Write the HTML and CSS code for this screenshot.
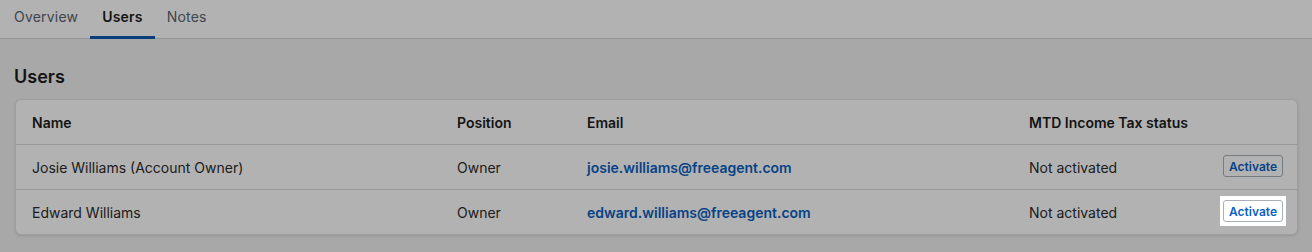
FILE: index.html
```
<!DOCTYPE html>
<html lang="en">
<head>
  <meta charset="UTF-8">
  <meta name="viewport" content="width=device-width, initial-scale=1.0">
  <title>Users</title>
  <link rel="stylesheet" href="styles.css">
</head>
<body>
  <nav class="tabs">
    <a class="tab">Overview</a>
    <a class="tab active">Users</a>
    <a class="tab">Notes</a>
  </nav>

  <main class="page">
    <h2 class="section-title">Users</h2>

    <div class="card">
      <div class="row head">
        <div class="cell">Name</div>
        <div class="cell">Position</div>
        <div class="cell">Email</div>
        <div class="cell">MTD Income Tax status</div>
        <div class="cell"></div>
      </div>
      <div class="row">
        <div class="cell">Josie Williams (Account Owner)</div>
        <div class="cell">Owner</div>
        <div class="cell"><a class="email">josie.williams@freeagent.com</a></div>
        <div class="cell">Not activated</div>
        <div class="cell action"><button class="btn">Activate</button></div>
      </div>
      <div class="row">
        <div class="cell">Edward Williams</div>
        <div class="cell">Owner</div>
        <div class="cell"><a class="email">edward.williams@freeagent.com</a></div>
        <div class="cell">Not activated</div>
        <div class="cell action"><span class="spotlight"><button class="btn">Activate</button></span></div>
      </div>
    </div>
  </main>
</body>
</html>
```

FILE: styles.css
```
:root {
  --text: #2b2b2b;
  --muted: #5b6470;
  --blue: #0b5fc0;
  --line: #dcdcdc;
  --page-bg: #f1f1f1;
}

body {
  margin: 0;
  background-color: var(--page-bg);
  color: var(--text);
  font-family: Inter, "Noto Sans", sans-serif;
  font-size: 14px;
  height: 252px;
  overflow: hidden;
}

.tabs {
  display: flex;
  height: 38px;
  padding-left: 2px;
  background-color: #fff;
  border-bottom: 1px solid #d4d4d4;
}

.tab {
  display: flex;
  align-items: center;
  padding: 0 12px 4px;
  color: var(--muted);
  letter-spacing: 0.2px;
  border-bottom: 3px solid transparent;
  margin-bottom: -1px;
}

.tab.active {
  color: #1c1c1c;
  font-weight: 600;
  border-bottom-color: #0d57b0;
}

.page {
  padding: 0 14px 0 15px;
}

.section-title {
  margin: 27px 0 11px -1px;
  font-size: 18px;
  font-weight: 600;
  color: #1c1c1c;
  line-height: 22px;
}

.card {
  width: 1281px;
  background-color: #fff;
  border: 1px solid #e2e2e2;
  border-radius: 6px;
  box-shadow: 0 1px 3px rgba(0, 0, 0, 0.12);
}

.row {
  display: grid;
  grid-template-columns: 425px 130px 442px 1fr auto;
  height: 44px;
  align-items: center;
  border-top: 1px solid var(--line);
}

.row.head {
  border-top: 0;
  font-weight: 600;
  color: #1c1c1c;
}

.cell {
  padding-left: 16px;
  white-space: nowrap;
}

.cell.action {
  display: flex;
  align-items: center;
  padding-right: 14px;
  margin-top: -2px;
}

.email {
  color: var(--blue);
  font-weight: 600;
}

.btn {
  font-family: inherit;
  font-size: 12px;
  font-weight: 600;
  color: var(--blue);
  background-color: #fff;
  border: 1px solid #a9b0b8;
  border-radius: 3px;
  height: 22px;
  padding: 0 5px;
}

/* product tour: dim everything but the second button */
.spotlight {
  position: relative;
  display: flex;
  z-index: 2;
}

.spotlight::before {
  content: '';
  position: absolute;
  top: -4px;
  bottom: -4px;
  left: -3px;
  right: -3px;
  background-color: #fff;
  box-shadow: 0 0 0 3000px rgba(0, 0, 0, 0.3);
  z-index: -1;
}
```
